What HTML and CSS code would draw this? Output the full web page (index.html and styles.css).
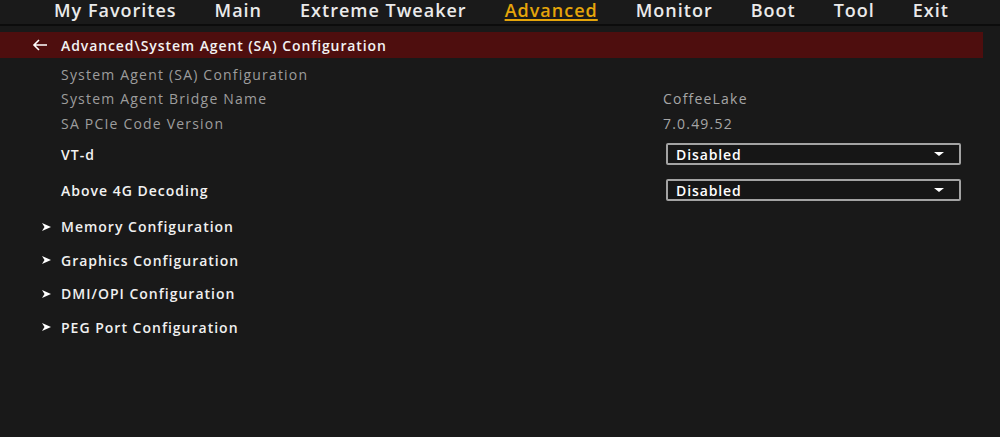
FILE: index.html
```html
<!DOCTYPE html>
<html lang="en">
<head>
  <meta charset="UTF-8" />
  <title>Advanced - System Agent (SA) Configuration</title>
  <link rel="stylesheet" href="styles.css">
</head>
<body>
  <nav class="tabs">
    <span class="tab">My Favorites</span>
    <span class="tab">Main</span>
    <span class="tab">Extreme Tweaker</span>
    <span class="tab active">Advanced</span>
    <span class="tab">Monitor</span>
    <span class="tab">Boot</span>
    <span class="tab">Tool</span>
    <span class="tab">Exit</span>
  </nav>

  <div class="path-bar">
    <svg class="back" width="16" height="12" viewBox="0 0 16 12">
      <path d="M15 6H2M7 1L2 6l5 5" fill="none" stroke="#fff" stroke-width="1.6"/>
    </svg>
    <span>Advanced\System Agent (SA) Configuration</span>
  </div>

  <div class="settings">
    <div class="row info">
      <span class="label">System Agent (SA) Configuration</span>
    </div>
    <div class="row info">
      <span class="label">System Agent Bridge Name</span>
      <span class="value">CoffeeLake</span>
    </div>
    <div class="row info">
      <span class="label">SA PCIe Code Version</span>
      <span class="value">7.0.49.52</span>
    </div>
    <div class="row option">
      <span class="label">VT-d</span>
      <div class="select"><span>Disabled</span><i class="caret"></i></div>
    </div>
    <div class="row option">
      <span class="label">Above 4G Decoding</span>
      <div class="select"><span>Disabled</span><i class="caret"></i></div>
    </div>

    <div class="submenus">
      <div class="row sub"><svg class="arrow" width="9" height="8" viewBox="0 0 9 8"><path d="M0 0L9 4L0 8L2.5 4Z" fill="#fff"/></svg><span class="label">Memory Configuration</span></div>
      <div class="row sub"><svg class="arrow" width="9" height="8" viewBox="0 0 9 8"><path d="M0 0L9 4L0 8L2.5 4Z" fill="#fff"/></svg><span class="label">Graphics Configuration</span></div>
      <div class="row sub"><svg class="arrow" width="9" height="8" viewBox="0 0 9 8"><path d="M0 0L9 4L0 8L2.5 4Z" fill="#fff"/></svg><span class="label">DMI/OPI Configuration</span></div>
      <div class="row sub"><svg class="arrow" width="9" height="8" viewBox="0 0 9 8"><path d="M0 0L9 4L0 8L2.5 4Z" fill="#fff"/></svg><span class="label">PEG Port Configuration</span></div>
    </div>
  </div>
</body>
</html>
```

FILE: styles.css
```css
body {
  margin: 0;
  padding: 0;
  background-color: #191919;
  color: #eee;
  font-family: 'Open Sans', 'Noto Sans', sans-serif;
  height: 437px;
  overflow: hidden;
}
.tabs {
  display: flex;
  height: 24px;
  padding-left: 54px;
  gap: 38px;
  background-color: #1a1a1a;
  border-bottom: 2px solid #0c0c0c;
}
.tab {
  font-size: 18px;
  font-weight: 600;
  line-height: 21px;
  color: #eaeaea;
  letter-spacing: 1px;
}
.tab.active {
  color: #e5a50a;
  text-decoration: underline;
  text-underline-offset: 2px;
  text-decoration-thickness: 2px;
}
.path-bar {
  display: flex;
  align-items: center;
  margin-top: 6px;
  width: 983px;
  height: 26px;
  background-color: #4e0e0e;
  color: #f2f2f2;
  font-size: 14px;
  font-weight: 600;
  letter-spacing: 0.9px;
}
.path-bar .back {
  margin-left: 32px;
  margin-right: 13px;
}
.settings {
  padding-top: 4px;
}
.row {
  display: flex;
  align-items: center;
  padding-left: 61px;
  font-size: 14px;
  letter-spacing: 1px;
}
.row .label {
  width: 602px;
}
.info {
  height: 24px;
  color: #9d9d9d;
  letter-spacing: 1.2px;
}
.info + .info {
  height: 25px;
}
.info .value {
  color: #a6a6a6;
  letter-spacing: 1.2px;
}
.option {
  height: 36px;
  color: #f2f2f2;
  font-weight: 600;
}
.select {
  display: flex;
  align-items: center;
  justify-content: space-between;
  box-sizing: border-box;
  width: 295px;
  height: 22px;
  margin-left: 3px;
  padding: 0 15px 0 8px;
  border: 2px solid #a3a3a3;
  border-radius: 2px;
  background-color: #161616;
  font-size: 14px;
  letter-spacing: 0.9px;
  color: #fff;
}
.caret {
  width: 0;
  height: 0;
  border-left: 5px solid transparent;
  border-right: 5px solid transparent;
  border-top: 4px solid #fff;
}
.submenus {
  padding-top: 2px;
}
.sub {
  height: 33.5px;
  padding-left: 42px;
  color: #f0f0f0;
  font-weight: 600;
}
.sub .arrow {
  margin-right: 10px;
}
```
